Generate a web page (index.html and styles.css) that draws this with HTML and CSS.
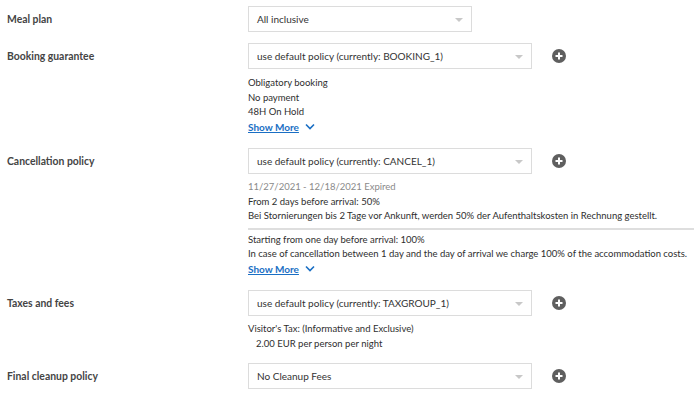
FILE: index.html
```html
<!DOCTYPE html>
<html lang="en">

<head>
  <meta charset="UTF-8">
  <title>Rate plan policies</title>
  <link rel="stylesheet" href="styles.css">
</head>

<body>

  <div class="policy-form">

    <!-- Meal plan -->
    <div class="row">
      <div class="row-label">Meal plan</div>
      <div class="row-field">
        <div class="field-line">
          <div class="select select-short">All inclusive<span class="caret"></span></div>
        </div>
      </div>
    </div>

    <!-- Booking guarantee -->
    <div class="row">
      <div class="row-label">Booking guarantee</div>
      <div class="row-field">
        <div class="field-line">
          <div class="select">use default policy (currently: BOOKING_1)<span class="caret"></span></div>
          <span class="add-btn"><svg width="14" height="14" viewBox="0 0 14 14"><circle cx="7" cy="7" r="7" fill="#5f5f5f"/><path d="M7 3.5v7M3.5 7h7" stroke="#fff" stroke-width="2"/></svg></span>
        </div>
        <div class="details">
          <div>Obligatory booking</div>
          <div>No payment</div>
          <div>48H On Hold</div>
          <div class="more"><a class="show-more" href="#">Show More</a><svg width="10" height="7" viewBox="0 0 10 7"><path d="M1 1.5l4 4 4-4" fill="none" stroke="#1a6fc4" stroke-width="1.6"/></svg></div>
        </div>
      </div>
    </div>

    <!-- Cancellation policy -->
    <div class="row">
      <div class="row-label">Cancellation policy</div>
      <div class="row-field">
        <div class="field-line">
          <div class="select">use default policy (currently: CANCEL_1)<span class="caret"></span></div>
          <span class="add-btn"><svg width="14" height="14" viewBox="0 0 14 14"><circle cx="7" cy="7" r="7" fill="#5f5f5f"/><path d="M7 3.5v7M3.5 7h7" stroke="#fff" stroke-width="2"/></svg></span>
        </div>
        <div class="details details-tight">
          <div class="muted">11/27/2021 - 12/18/2021 Expired</div>
          <div>From 2 days before arrival: 50%</div>
          <div>Bei Stornierungen bis 2 Tage vor Ankunft, werden 50% der Aufenthaltskosten in Rechnung gestellt.</div>
          <div class="separator"></div>
          <div>Starting from one day before arrival: 100%</div>
          <div>In case of cancellation between 1 day and the day of arrival we charge 100% of the accommodation costs.</div>
          <div class="more"><a class="show-more" href="#">Show More</a><svg width="10" height="7" viewBox="0 0 10 7"><path d="M1 1.5l4 4 4-4" fill="none" stroke="#1a6fc4" stroke-width="1.6"/></svg></div>
        </div>
      </div>
    </div>

    <!-- Taxes and fees -->
    <div class="row">
      <div class="row-label">Taxes and fees</div>
      <div class="row-field">
        <div class="field-line">
          <div class="select">use default policy (currently: TAXGROUP_1)<span class="caret"></span></div>
          <span class="add-btn"><svg width="14" height="14" viewBox="0 0 14 14"><circle cx="7" cy="7" r="7" fill="#5f5f5f"/><path d="M7 3.5v7M3.5 7h7" stroke="#fff" stroke-width="2"/></svg></span>
        </div>
        <div class="details details-tax">
          <div>Visitor's Tax: (Informative and Exclusive)</div>
          <div class="indent">2.00 EUR per person per night</div>
        </div>
      </div>
    </div>

    <!-- Final cleanup policy -->
    <div class="row">
      <div class="row-label">Final cleanup policy</div>
      <div class="row-field">
        <div class="field-line">
          <div class="select">No Cleanup Fees<span class="caret"></span></div>
          <span class="add-btn"><svg width="14" height="14" viewBox="0 0 14 14"><circle cx="7" cy="7" r="7" fill="#5f5f5f"/><path d="M7 3.5v7M3.5 7h7" stroke="#fff" stroke-width="2"/></svg></span>
        </div>
      </div>
    </div>

  </div>

</body>

</html>
```

FILE: styles.css
```css
body {
  margin: 0;
  background: #fff;
  font-family: Lato, "Noto Sans", sans-serif;
  color: #333;
}

.policy-form {
  padding: 6px 0 0 7px;
}

.row {
  display: grid;
  grid-template-columns: 241px 1fr;
  margin-bottom: 11px;
}

.row-label {
  font-size: 10.4px;
  font-weight: 700;
  color: #444;
  height: 26px;
  line-height: 26px;
}

.field-line {
  display: flex;
  align-items: center;
}

.select {
  position: relative;
  box-sizing: border-box;
  width: 284px;
  height: 26px;
  line-height: 24px;
  padding: 0 8px;
  border: 1px solid #dcdcdc;
  font-size: 10px;
  color: #333;
  background: #fff;
}

.select-short {
  width: 224px;
}

.caret {
  position: absolute;
  right: 8px;
  top: 11px;
  border-left: 4px solid transparent;
  border-right: 4px solid transparent;
  border-top: 4px solid #c8c8c8;
}

.add-btn {
  display: flex;
  margin-left: 20px;
}

.details {
  font-size: 9.5px;
  line-height: 14.5px;
  color: #2e2e2e;
  padding-top: 7px;
  margin-bottom: 3px;
}

.details-tight {
  padding-top: 6px;
  margin-bottom: 3px;
}

.details-tax {
  padding-top: 6px;
  margin-bottom: 1px;
}

.muted {
  color: #8a8a8a;
}

.indent {
  padding-left: 8px;
}

.separator {
  height: 2px;
  background: #dedede;
  margin: 4px 0 3px;
}

.more {
  display: flex;
  align-items: center;
  gap: 6px;
  height: 14.5px;
}

.show-more {
  color: #1a6fc4;
  font-size: 10px;
  font-weight: 700;
  text-decoration: underline;
}
```
